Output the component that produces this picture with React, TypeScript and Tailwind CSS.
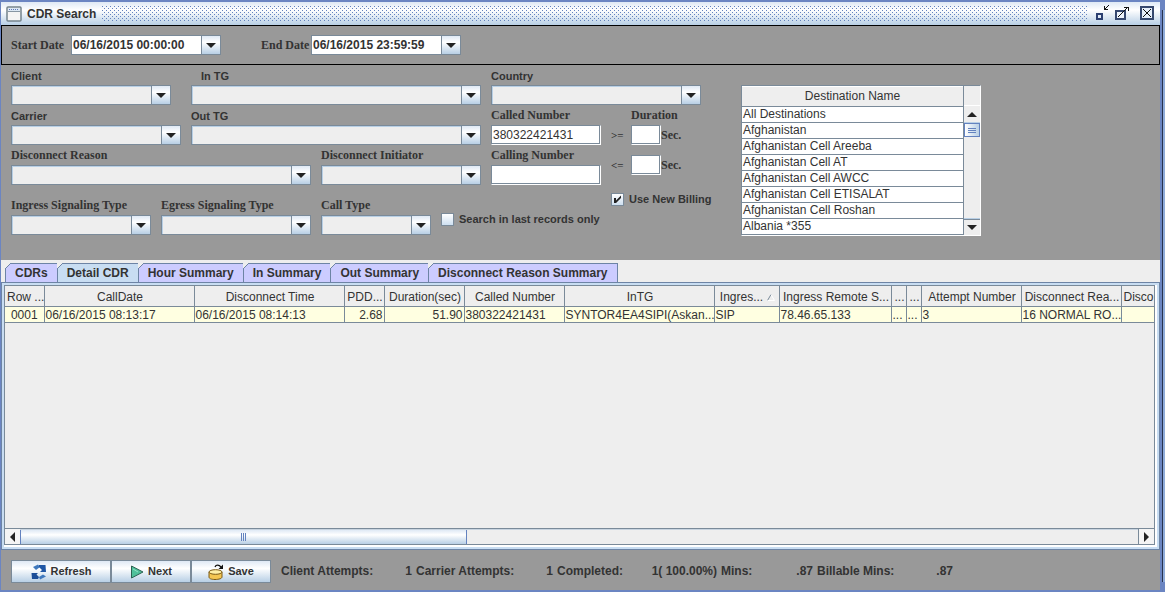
import { useState } from 'react';
import type { ReactNode } from 'react';

interface FieldProps {
    id: string;
    label: string;
    width: string;
    serif?: boolean;
    labelClass?: string;
}

const SERIF = "font-['Liberation_Serif',serif] text-xs";
const GLOSS = 'bg-linear-to-b from-[#dfe9f5] via-white via-35% to-[#b8cfe5]';

const DESTINATIONS = [
    'All Destinations',
    'Afghanistan',
    'Afghanistan Cell Areeba',
    'Afghanistan Cell AT',
    'Afghanistan Cell AWCC',
    'Afghanistan Cell ETISALAT',
    'Afghanistan Cell Roshan',
    'Albania *355',
];

const TABS = ['CDRs', 'Detail CDR', 'Hour Summary', 'In Summary', 'Out Summary', 'Disconnect Reason Summary'];

const COLUMNS = [
    { title: 'Row ...', value: '0001', width: 'w-[39px]', align: 'text-center' },
    { title: 'CallDate', value: '06/16/2015 08:13:17', width: 'w-[150px]', align: 'text-left' },
    { title: 'Disconnect Time', value: '06/16/2015 08:14:13', width: 'w-[150px]', align: 'text-left' },
    { title: 'PDD...', value: '2.68', width: 'w-[40px]', align: 'text-right' },
    { title: 'Duration(sec)', value: '51.90', width: 'w-[80px]', align: 'text-right' },
    { title: 'Called Number', value: '380322421431', width: 'w-[100px]', align: 'text-left' },
    { title: 'InTG', value: 'SYNTOR4EA4SIPI(Askan...', width: 'w-[150px]', align: 'text-left' },
    { title: 'Ingres...', value: 'SIP', width: 'w-[65px]', align: 'text-left', sorted: true },
    { title: 'Ingress Remote S...', value: '78.46.65.133', width: 'w-[112px]', align: 'text-left' },
    { title: '...', value: '...', width: 'w-[15px]', align: 'text-left' },
    { title: '...', value: '...', width: 'w-[15px]', align: 'text-left' },
    { title: 'Attempt Number', value: '3', width: 'w-[100px]', align: 'text-left' },
    { title: 'Disconnect Rea...', value: '16 NORMAL RO...', width: 'w-[100px]', align: 'text-left' },
    { title: 'Disco', value: '', width: '', align: 'text-left' },
];

const Arrow = ({ dir }: { dir: 'up' | 'down' | 'left' | 'right' }) => {
    const shapes = {
        up: 'M0 5 L5 0 L10 5 Z',
        down: 'M0 0 H10 L5 5 Z',
        left: 'M5 0 V10 L0 5 Z',
        right: 'M0 0 L5 5 L0 10 Z',
    };
    const flat = dir === 'up' || dir === 'down';
    return (
        <svg width={flat ? 10 : 5} height={flat ? 5 : 10} viewBox={flat ? '0 0 10 5' : '0 0 5 10'} aria-hidden="true">
            <path d={shapes[dir]} fill="#222" />
        </svg>
    );
};

const Combo = ({ id, label, width, serif, labelClass = '' }: FieldProps) => (
    <div className={`${width} shrink-0`}>
        <label
            htmlFor={id}
            className={`block h-5 font-bold ${serif ? `leading-5 ${SERIF}` : 'text-[11px] leading-[22px]'} ${labelClass}`}
        >
            {label}
        </label>
        <div className="relative h-5">
            <select
                id={id}
                className="block h-5 w-full appearance-none border border-[#7a8a99] bg-[#eee] pr-5 text-[11px] shadow-[inset_1px_1px_#b8cfe5]"
            />
            <span className={`pointer-events-none absolute inset-y-px right-px flex w-[19px] items-center justify-center border-l border-[#7a8a99] ${GLOSS}`}>
                <Arrow dir="down" />
            </span>
        </div>
    </div>
);

const DateCombo = ({ id, label, value, labelWidth }: { id: string; label: string; value: string; labelWidth: string }) => (
    <div className="flex items-center">
        <label htmlFor={id} className={`font-bold whitespace-nowrap ${labelWidth} ${SERIF}`}>{label}</label>
        <div className="flex h-5 w-[150px] border border-[#7a8a99] bg-white">
            <input
                id={id}
                defaultValue={value}
                className="min-w-0 flex-1 px-px text-xs font-bold outline-none"
            />
            <button
                type="button"
                aria-label={`Choose ${label}`}
                className={`flex w-[19px] items-center justify-center border-l border-[#7a8a99] ${GLOSS}`}
            >
                <Arrow dir="down" />
            </button>
        </div>
    </div>
);

const BOX = 'block h-5 border border-t-[#7a8a99] border-l-[#7a8a99] border-r-white border-b-white bg-white px-px text-xs shadow-[inset_-1px_-1px_#7a8a99] outline-none';

const NumberField = ({ id, label, value }: { id: string; label: string; value: string }) => (
    <div className="w-[110px] shrink-0">
        <label htmlFor={id} className={`block h-5 leading-5 font-bold ${SERIF}`}>{label}</label>
        <input id={id} defaultValue={value} className={`w-full ${BOX}`} />
    </div>
);

const DurationField = ({ op, name }: { op: string; name: string }) => (
    <div className="flex h-5 items-center">
        <span className="w-5 font-['Liberation_Serif',serif] text-[11px] font-bold">{op}</span>
        <input aria-label={name} className={`w-[30px] ${BOX}`} />
        <span className={`font-bold ${SERIF}`}>Sec.</span>
    </div>
);

const Check = ({ id, label, checked = false }: { id: string; label: string; checked?: boolean }) => {
    const [on, setOn] = useState(checked);
    return (
        <div className="flex h-5 items-center gap-[5px]">
            <span className="relative size-[13px]">
                <input
                    id={id}
                    type="checkbox"
                    checked={on}
                    onChange={() => setOn(!on)}
                    className="block size-[13px] appearance-none border border-[#7a8a99] bg-linear-to-b from-white to-[#cddff0]"
                />
                {on && (
                    <svg className="pointer-events-none absolute inset-0" width="13" height="13" viewBox="0 0 13 13" aria-hidden="true">
                        <path d="M3 5 H5 V7.500 L10 2.500 V5 L5 10 H3 Z" fill="#222" />
                    </svg>
                )}
            </span>
            <label htmlFor={id} className="text-[11px] font-bold whitespace-nowrap">{label}</label>
        </div>
    );
};

const TitleBar = () => (
    <header className={`flex h-[23px] items-center px-[5px] ${GLOSS}`}>
        <svg width="16" height="16" viewBox="0 0 16 16" aria-hidden="true">
            <rect x="1" y="1" width="14" height="14" rx="1" fill="#f4f4f4" stroke="#73828c" strokeWidth="1.5" />
            <rect x="2" y="2" width="12" height="3" fill="#dce8f4" />
            <path d="M3 3.5 H13" stroke="#5f7ab8" strokeDasharray="1 1" />
            <path d="M2 5.5 H14" stroke="#8796a3" />
        </svg>
        <h1 className="ml-[5px] text-xs font-bold">CDR Search</h1>
        <svg className="ml-[6px] h-[15px] min-w-0 flex-1" shapeRendering="crispEdges" aria-hidden="true">
            <defs>
                <pattern id="bumps" width="4" height="4" patternUnits="userSpaceOnUse">
                    <rect x="0" y="0" width="1" height="1" fill="#6382bf" />
                    <rect x="2" y="2" width="1" height="1" fill="#6382bf" />
                </pattern>
            </defs>
            <rect width="100%" height="100%" fill="url(#bumps)" />
        </svg>
        <div className="ml-[6px] flex items-center gap-1 pb-[2px]">
            <button type="button" aria-label="Minimize">
                <svg className="block" width="16" height="16" viewBox="0 0 16 16" shapeRendering="crispEdges" aria-hidden="true">
                    <rect x="4" y="9" width="5" height="5" fill="#dfe9f5" stroke="#2b3f70" strokeWidth="2" />
                    <path d="M11 1 H12 V4 H15 V5 H11 Z M12 3 H13 V2 H14 V1 H15 V0 H16 V1 H15 V2 H14 V3 H13 V4 H12 Z" fill="#111" />
                </svg>
            </button>
            <button type="button" aria-label="Maximize">
                <svg className="block" width="16" height="16" viewBox="0 0 16 16" shapeRendering="crispEdges" aria-hidden="true">
                    <rect x="3" y="6" width="9" height="8" fill="#eef4fb" stroke="#36486e" strokeWidth="2" />
                    <path d="M5 12 L14 3" stroke="#111" />
                    <path d="M11 2.5 H15.5 V6" fill="none" stroke="#111" />
                </svg>
            </button>
            <button type="button" aria-label="Close" className="ml-[6px]">
                <svg className="block" width="16" height="16" viewBox="0 0 16 16" shapeRendering="crispEdges" aria-hidden="true">
                    <rect x="2" y="2" width="12" height="12" fill="#e6effa" stroke="#36486e" strokeWidth="2" />
                    <path d="M4 4 L12 12 M12 4 L4 12" stroke="#111" strokeWidth="1.2" />
                </svg>
            </button>
        </div>
    </header>
);

const DestinationList = () => (
    <div className="flex w-[240px] shrink-0 self-start border border-t-[#7a8a99] border-l-[#7a8a99] border-r-white border-b-white bg-[#eee]">
        <table className="min-w-0 flex-1 table-fixed border-collapse text-left text-xs">
            <thead>
                <tr>
                    <th className="border-t border-b border-t-white border-b-[#7a8a99] p-0 text-center leading-[19px] font-normal">
                        Destination Name
                    </th>
                </tr>
            </thead>
            <tbody>
                {DESTINATIONS.map((name) => (
                    <tr key={name}>
                        <td className="h-4 border-b border-[#7a8a99] bg-white px-px py-0 leading-[15px] last:border-b">{name}</td>
                    </tr>
                ))}
            </tbody>
        </table>
        <div className="flex w-[17px] flex-col border-l border-[#7a8a99]">
            <div className="h-5 border-b border-white" />
            <button type="button" aria-label="Scroll up" className="flex h-4 items-center justify-center">
                <Arrow dir="up" />
            </button>
            <div className="flex-1 border-y border-[#b8cfe5]">
                <div className="flex h-[14px] flex-col items-center justify-center gap-px border border-[#6382bf] bg-linear-to-r from-white to-[#b8cfe5]">
                    <span className="h-px w-2 bg-[#6382bf]" />
                    <span className="h-px w-2 bg-[#6382bf]" />
                    <span className="h-px w-2 bg-[#6382bf]" />
                </div>
            </div>
            <button type="button" aria-label="Scroll down" className="flex h-4 items-center justify-center border-t border-[#7a8a99]">
                <Arrow dir="down" />
            </button>
        </div>
    </div>
);

const SearchForm = () => (
    <section className="flex h-[195px] shrink-0 pl-[10px]">
        <div className="w-[730px] shrink-0">
            <div className="flex">
                <Combo id="client" label="Client" width="w-[160px]" />
                <div className="ml-5 flex gap-[10px]">
                    <Combo id="in-tg" label="In TG" width="w-[290px]" labelClass="pl-[10px]" />
                    <Combo id="country" label="Country" width="w-[210px]" />
                </div>
            </div>
            <div className="flex gap-[10px]">
                <div className="w-[590px]">
                    <div className="flex gap-[10px]">
                        <Combo id="carrier" label="Carrier" width="w-[170px]" />
                        <Combo id="out-tg" label="Out TG" width="w-[290px]" />
                        <NumberField id="called" label="Called Number" value="380322421431" />
                    </div>
                    <div className="flex gap-[10px]">
                        <Combo id="reason" label="Disconnect Reason" width="w-[300px]" serif />
                        <Combo id="initiator" label="Disconnect Initiator" width="w-[160px]" serif />
                        <NumberField id="calling" label="Calling Number" value="" />
                    </div>
                    <div className="mt-[10px] flex gap-[10px]">
                        <Combo id="ingress" label="Ingress Signaling Type" width="w-[140px]" serif />
                        <Combo id="egress" label="Egress Signaling Type" width="w-[150px]" serif />
                        <Combo id="call-type" label="Call Type" width="w-[110px]" serif />
                        <div className="pt-[14px]">
                            <Check id="last-only" label="Search in last records only" />
                        </div>
                    </div>
                </div>
                <div>
                    <div className={`h-5 pl-5 leading-5 font-bold ${SERIF}`}>Duration</div>
                    <DurationField op=">=" name="Minimum duration" />
                    <div className="mt-[10px]">
                        <DurationField op="<=" name="Maximum duration" />
                    </div>
                    <div className="mt-[14px]">
                        <Check id="new-billing" label="Use New Billing" checked />
                    </div>
                </div>
            </div>
        </div>
        <div className="pt-5">
            <DestinationList />
        </div>
    </section>
);

const CdrTable = () => (
    <table className="w-full table-fixed border-collapse text-xs whitespace-nowrap">
        <colgroup>
            {COLUMNS.map((col, i) => (
                <col key={i} className={col.width} />
            ))}
        </colgroup>
        <thead>
            <tr>
                {COLUMNS.map((col, i) => (
                    <th
                        key={i}
                        className="h-5 overflow-hidden border-r border-b border-[#7a8a99] pt-[2px] pr-0 pb-0 pl-[2px] font-normal last:border-r-0 last:text-left"
                    >
                        {col.title}
                        {col.sorted && (
                            <svg className="ml-1 inline" width="8" height="7" viewBox="0 0 8 7" aria-hidden="true">
                                <path d="M0.5 6.5 L4 0.5" stroke="#7a8a99" />
                                <path d="M4 0.5 L7.5 6.5 H0.5" fill="none" stroke="#fff" />
                            </svg>
                        )}
                    </th>
                ))}
            </tr>
        </thead>
        <tbody>
            <tr className="bg-[#ffffe1]">
                {COLUMNS.map((col, i) => (
                    <td
                        key={i}
                        className={`h-4 overflow-hidden border-r border-b border-[#7a8a99] px-px pt-px pb-0 leading-[14px] last:border-r-0 ${col.align}`}
                    >
                        {col.value}
                    </td>
                ))}
            </tr>
        </tbody>
    </table>
);

const Results = () => {
    const [active, setActive] = useState('Detail CDR');
    return (
        <section className="flex flex-1 flex-col bg-[#eee] pt-[3px]">
            <div role="tablist" className="flex pl-1">
                {TABS.map((tab) => (
                    <button
                        key={tab}
                        type="button"
                        role="tab"
                        aria-selected={tab === active}
                        onClick={() => setActive(tab)}
                        className={`relative h-[19px] border-t border-l border-[#6d84a5] pr-[9px] pl-[9px] text-xs font-bold last:border-r ${
                            tab === active ? 'bg-[#c8ddf2]' : 'bg-[#ccccff]'
                        }`}
                    >
                        <svg className="absolute -top-px -left-px" width="6" height="6" viewBox="0 0 6 6" aria-hidden="true">
                            <path d="M0 0 H6 L0 6 Z" fill="#eee" />
                            <path d="M0 6 L6 0" stroke="#6d84a5" />
                        </svg>
                        {tab}
                    </button>
                ))}
            </div>
            <div className="flex flex-1 flex-col border border-[#6d84a5] bg-[#c8ddf2] p-[2px]">
                <div className="flex flex-1 flex-col border-r-2 border-b-2 border-white bg-[#eee]">
                    <div className="flex flex-1 flex-col border border-[#7a8a99]">
                        <div className="flex-1 overflow-hidden">
                            <CdrTable />
                        </div>
                        <div className="flex h-4 border-t border-[#7a8a99]">
                            <button type="button" aria-label="Scroll left" className="flex w-[15px] items-center justify-center bg-[#f4f4f4]">
                                <Arrow dir="left" />
                            </button>
                            <div className="flex-1 border-t border-[#c8d4e0]">
                                <div className={`flex h-full w-2/5 items-center justify-center gap-px border-x border-[#6382bf] ${GLOSS}`}>
                                    <span className="h-2 w-px bg-[#6382bf]" />
                                    <span className="h-2 w-px bg-[#6382bf]" />
                                    <span className="h-2 w-px bg-[#6382bf]" />
                                </div>
                            </div>
                            <button type="button" aria-label="Scroll right" className="flex w-4 items-center justify-center border-l border-[#7a8a99] bg-[#f4f4f4]">
                                <Arrow dir="right" />
                            </button>
                        </div>
                    </div>
                </div>
            </div>
        </section>
    );
};

const ToolButton = ({ width, icon, children }: { width: string; icon: ReactNode; children: ReactNode }) => (
    <button
        type="button"
        className={`flex h-[23px] items-center justify-center gap-1 border border-[#7a8a99] pt-px text-[11px] font-bold ${width} ${GLOSS}`}
    >
        {icon}
        {children}
    </button>
);

const RefreshIcon = () => (
    <svg width="16" height="16" viewBox="0 0 16 16" aria-hidden="true">
        <path d="M2 3 L7 0.500 L9 3 L5 6 Z" fill="#3f78bd" />
        <path d="M8 1 H14.500 L15 8 H9 L11 6 L8 3 Z" fill="#1f56a5" />
        <path d="M0.500 9 H7 L5.500 10.500 L8 13 L7 15 H1 Z" fill="#1b4d98" />
        <path d="M8 13 L12 10.500 L15 12.500 L9 15.500 Z" fill="#3f78bd" />
    </svg>
);

const NextIcon = () => (
    <svg width="14" height="14" viewBox="0 0 14 14" aria-hidden="true">
        <path d="M1.5 1 L13 7 L1.5 13 Z" fill="#4fc09a" stroke="#2c6152" />
        <path d="M3 4 L8 7" stroke="#8fe0c4" />
    </svg>
);

const SaveIcon = () => (
    <svg width="16" height="16" viewBox="0 0 16 16" aria-hidden="true">
        <path d="M1 8 V13 C1 14.500 3 15.500 7 15.500 C11 15.500 14 14.500 14 13 V8 Z" fill="#f4c653" stroke="#7c5a14" />
        <ellipse cx="7.500" cy="8" rx="6.500" ry="2.300" fill="#fff0a8" stroke="#7c5a14" />
        <path d="M7 3 C8 0.500 11 0.500 13 3" fill="none" stroke="#111" strokeWidth="1.300" />
        <path d="M15 0.500 V5 H10.500 Z" fill="#111" />
    </svg>
);

const Footer = () => (
    <footer className="flex h-10 shrink-0 items-center pt-[2px] pl-[10px] text-xs font-bold whitespace-nowrap">
        <ToolButton width="w-[100px]" icon={<RefreshIcon />}>Refresh</ToolButton>
        <ToolButton width="w-[80px]" icon={<NextIcon />}>Next</ToolButton>
        <ToolButton width="w-[80px]" icon={<SaveIcon />}>Save</ToolButton>
        <div className="flex gap-1 pl-[10px]">
            <span className="w-[92px]">Client Attempts:</span>
            <span className="w-[35px] text-right">1</span>
            <span className="w-[98px]">Carrier Attempts:</span>
            <span className="w-[35px] text-right">1</span>
            <span className="w-[66px]">Completed:</span>
            <span className="w-[90px] text-right">1( 100.00%)</span>
            <span className="w-[32px]">Mins:</span>
            <span className="w-[56px] text-right">.87</span>
            <span className="w-[76px]">Billable Mins:</span>
            <span className="w-[56px] text-right">.87</span>
        </div>
    </footer>
);

const App = () => (
    <div className="flex min-h-screen bg-[#6b85c2] font-['Liberation_Sans',Arial,sans-serif] text-[#333]">
        <main className="my-[2px] ml-px flex min-w-0 flex-1 flex-col bg-[#999]">
            <TitleBar />
            <section className="flex h-10 shrink-0 items-center gap-10 border border-black pl-[9px]">
                <DateCombo id="start" label="Start Date" value="06/16/2015 00:00:00" labelWidth="w-[60px]" />
                <DateCombo id="end" label="End Date" value="06/16/2015 23:59:59" labelWidth="w-[50px]" />
            </section>
            <SearchForm />
            <Results />
            <Footer />
        </main>
        <div className="mt-[10px] mb-[10px] ml-[2px] w-[3px] border-r-2 border-l border-r-[#8fabd9] border-l-[#27324f]" />
    </div>
);

export default App;
